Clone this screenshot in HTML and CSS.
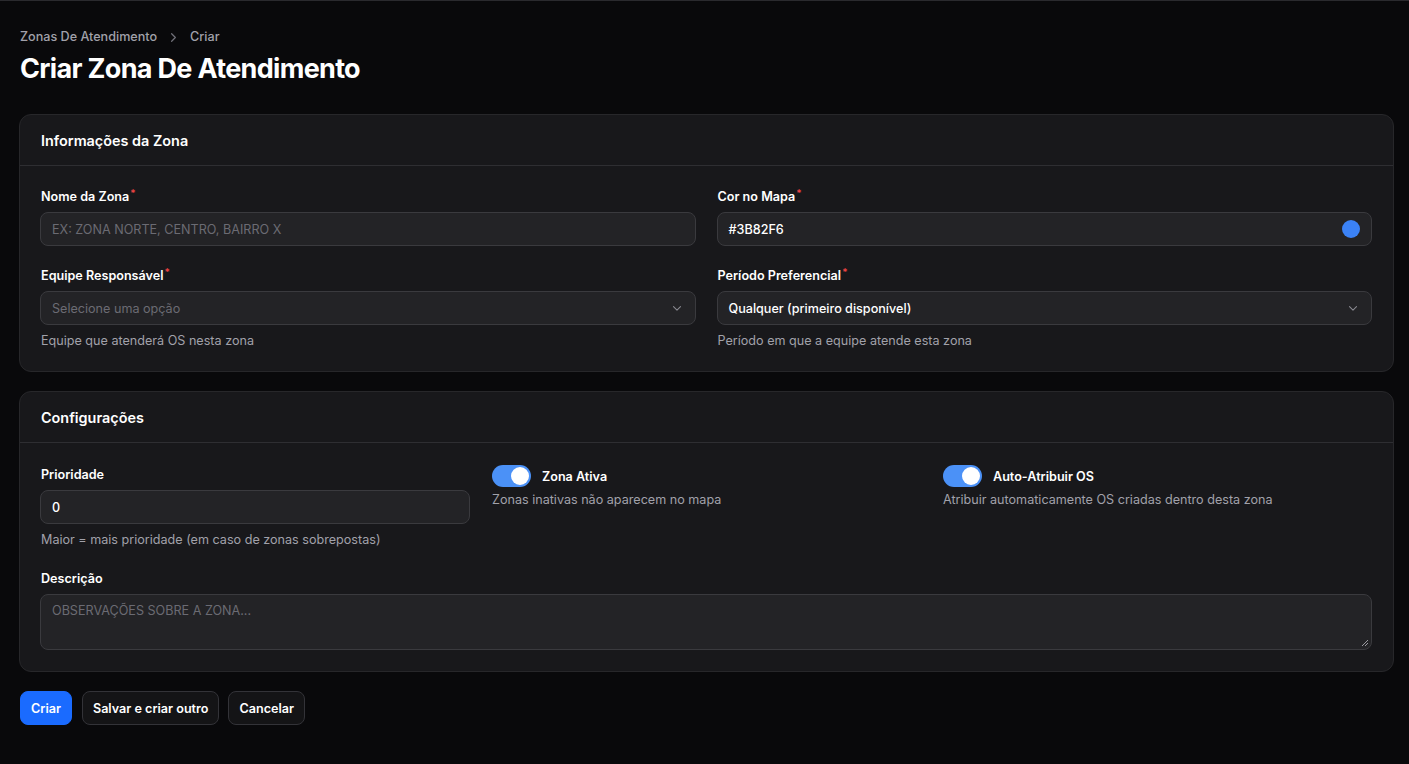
FILE: index.html
```html
<!DOCTYPE html>
<html lang="pt-BR">
<head>
    <meta charset="UTF-8">
    <meta name="viewport" content="width=device-width, initial-scale=1.0">
    <title>Criar Zona De Atendimento</title>
    <link rel="stylesheet" href="styles.css">
</head>
<body>
    <div class="page">
        <!-- Header -->
        <nav class="breadcrumbs">
            <span>Zonas De Atendimento</span>
            <svg class="crumb-sep" viewBox="0 0 20 20" width="15" height="15"><path d="M7.5 5l5 5-5 5" fill="none" stroke="currentColor" stroke-width="1.6" stroke-linecap="round" stroke-linejoin="round"/></svg>
            <span>Criar</span>
        </nav>
        <h1 class="title">Criar Zona De Atendimento</h1>

        <!-- Informações da Zona -->
        <section class="card">
            <div class="card-head">Informações da Zona</div>
            <div class="card-body grid-2">
                <div class="field">
                    <label>Nome da Zona<sup>*</sup></label>
                    <div class="input"><span class="placeholder">EX: ZONA NORTE, CENTRO, BAIRRO X</span></div>
                </div>
                <div class="field">
                    <label>Cor no Mapa<sup>*</sup></label>
                    <div class="input">
                        <span class="value">#3B82F6</span>
                        <span class="swatch"></span>
                    </div>
                </div>
                <div class="field">
                    <label>Equipe Responsável<sup>*</sup></label>
                    <div class="input select">
                        <span class="placeholder">Selecione uma opção</span>
                        <svg viewBox="0 0 20 20" width="14" height="14"><path d="M5 8l5 5 5-5" fill="none" stroke="currentColor" stroke-width="1.5" stroke-linecap="round" stroke-linejoin="round"/></svg>
                    </div>
                    <p class="hint">Equipe que atenderá OS nesta zona</p>
                </div>
                <div class="field">
                    <label>Período Preferencial<sup>*</sup></label>
                    <div class="input select">
                        <span class="value">Qualquer (primeiro disponível)</span>
                        <svg viewBox="0 0 20 20" width="14" height="14"><path d="M5 8l5 5 5-5" fill="none" stroke="currentColor" stroke-width="1.5" stroke-linecap="round" stroke-linejoin="round"/></svg>
                    </div>
                    <p class="hint">Período em que a equipe atende esta zona</p>
                </div>
            </div>
        </section>

        <!-- Configurações -->
        <section class="card">
            <div class="card-head">Configurações</div>
            <div class="card-body">
                <div class="grid-3">
                    <div class="field">
                        <label>Prioridade</label>
                        <div class="input"><span class="value">0</span></div>
                        <p class="hint">Maior = mais prioridade (em caso de zonas sobrepostas)</p>
                    </div>
                    <div class="field">
                        <div class="toggle-row">
                            <span class="toggle"><span class="knob"></span></span>
                            <span class="toggle-label">Zona Ativa</span>
                        </div>
                        <p class="hint">Zonas inativas não aparecem no mapa</p>
                    </div>
                    <div class="field">
                        <div class="toggle-row">
                            <span class="toggle"><span class="knob"></span></span>
                            <span class="toggle-label">Auto-Atribuir OS</span>
                        </div>
                        <p class="hint">Atribuir automaticamente OS criadas dentro desta zona</p>
                    </div>
                </div>
                <div class="field">
                    <label>Descrição</label>
                    <div class="input textarea">
                        <span class="placeholder">OBSERVAÇÕES SOBRE A ZONA...</span>
                        <svg class="grip" viewBox="0 0 8 8" width="8" height="8"><path d="M7 1L1 7M7 4L4 7" stroke="#9a9aa0" stroke-width="1"/></svg>
                    </div>
                </div>
            </div>
        </section>

        <div class="actions">
            <button class="btn primary">Criar</button>
            <button class="btn">Salvar e criar outro</button>
            <button class="btn">Cancelar</button>
        </div>
    </div>
</body>
</html>
```

FILE: styles.css
```css
* {
    margin: 0;
    padding: 0;
    box-sizing: border-box;
}

body {
    background-color: #09090b;
    color: #fff;
    font-family: Inter, "Noto Sans", sans-serif;
    font-size: 12.6px;
    border-top: 1px solid #2a2a2e;
    height: 100vh;
    overflow: hidden;
}

.page {
    padding: 27px 16px 0 19px;
}

.breadcrumbs {
    display: flex;
    align-items: center;
    gap: 9px;
    margin-left: 1px;
    font-size: 12.6px;
    font-weight: 500;
    color: #a1a1aa;
    line-height: 18px;
}

.crumb-sep {
    color: #71717a;
}

.title {
    margin-top: 7px;
    margin-left: 1px;
    font-size: 27px;
    font-weight: 700;
    letter-spacing: -0.025em;
    line-height: 32px;
}

.card {
    margin-top: 29px;
    background: #18181b;
    border: 1px solid #27272a;
    border-radius: 12px;
    width: 1375px;
}

.card + .card {
    margin-top: 19px;
}

.card-head {
    height: 51px;
    padding: 0 21px;
    display: flex;
    align-items: center;
    font-size: 14.4px;
    font-weight: 600;
    border-bottom: 1px solid #2e2e32;
}

.card-body {
    padding: 22px 21px 21px 20px;
}

.card + .card .card-body {
    padding-top: 23px;
}

.grid-2 {
    display: grid;
    grid-template-columns: 1fr 1fr;
    column-gap: 21px;
    row-gap: 21px;
}

.grid-3 {
    display: grid;
    grid-template-columns: 1fr 1fr 1fr;
    column-gap: 21px;
    margin-bottom: 21px;
}

.field label {
    display: block;
    font-size: 12.6px;
    font-weight: 600;
    line-height: 18px;
    margin: 0 0 6px 1px;
}

.field sup {
    color: #ef4444;
    font-size: 10px;
    vertical-align: top;
    line-height: 10px;
    margin-left: 1px;
}

.input {
    height: 34px;
    background: #232326;
    border: 1px solid #3a3a3e;
    border-radius: 8px;
    display: flex;
    align-items: center;
    justify-content: space-between;
    padding: 0 11px;
    font-size: 12.6px;
}

.placeholder {
    color: #6b6b73;
}

.value {
    color: #fff;
    font-weight: 500;
}

.select svg {
    color: #8a8a92;
}

.swatch {
    width: 18px;
    height: 18px;
    border-radius: 50%;
    background: #3b82f6;
}

.textarea {
    height: 56px;
    align-items: flex-start;
    padding-top: 8px;
    position: relative;
}

.grip {
    position: absolute;
    right: 2px;
    bottom: 2px;
}

.hint {
    margin: 7px 0 0 1px;
    font-size: 12.6px;
    color: #a1a1aa;
    line-height: 18px;
}

.toggle-row {
    display: flex;
    align-items: center;
    gap: 11px;
    height: 22px;
    margin-top: -1px;
    margin-left: 1px;
}

.toggle {
    width: 39px;
    height: 22px;
    border-radius: 11px;
    background: #4b91f7;
    position: relative;
}

.knob {
    position: absolute;
    top: 2px;
    right: 2px;
    width: 18px;
    height: 18px;
    border-radius: 50%;
    background: #fff;
}

.toggle-label {
    font-size: 12.6px;
    font-weight: 600;
}

.toggle-row + .hint {
    margin-top: 4px;
}

.actions {
    display: flex;
    gap: 9px;
    margin-top: 19px;
    margin-left: 1px;
}

.btn {
    height: 34px;
    padding: 0 10px;
    border-radius: 8px;
    border: 1px solid #333338;
    background: #141416;
    color: #fff;
    font-family: inherit;
    font-size: 12.6px;
    font-weight: 600;
}

.btn.primary {
    background: #1a6bff;
    border-color: #1a6bff;
    margin-right: 1px;
}
```
